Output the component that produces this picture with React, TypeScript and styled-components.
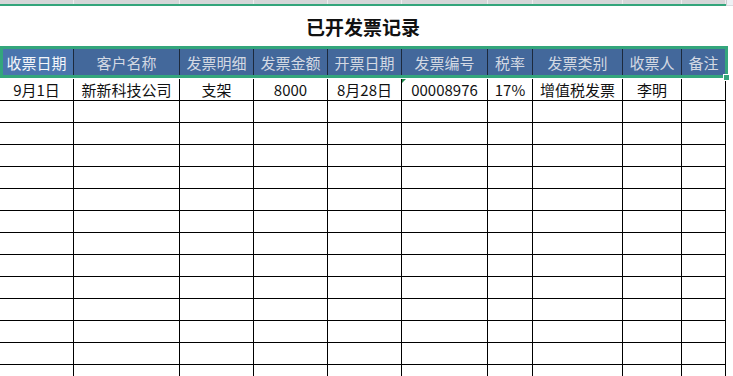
import React from "react";
import styled, { createGlobalStyle } from "styled-components";

const GlobalStyle = createGlobalStyle`
  html, body { margin: 0; padding: 0; background: #ffffff; }
  body { font-family: "Noto Sans CJK SC", "Noto Sans", sans-serif; }
`;

const COLS = [74, 106, 74, 74, 74, 86, 45, 90, 59, 44];
const template = COLS.map((c) => `${c}px`).join(" ");

const Page = styled.div`
  width: 733px;
  height: 376px;
  overflow: hidden;
  position: relative;
  background: #fff;
`;

const TopStrip = styled.div`
  display: flex;
  height: 6px;
`;

const StripCols = styled.div`
  display: grid;
  grid-template-columns: ${template};
  height: 4px;
  background: #d5d6d8;
  border-bottom: 2px solid #33a57b;
`;

const StripCol = styled.div`
  border-right: 1px solid #ececee;
`;

const StripCorner = styled.div`
  flex: 1;
  height: 6px;
  box-sizing: border-box;
  background: #eef1f5;
  border-left: 1px solid #c9ccd1;
  border-bottom: 1px solid #d9dce0;
`;

const Title = styled.div`
  width: 726px;
  height: 40px;
  display: flex;
  align-items: center;
  justify-content: center;
  font-size: 19px;
  font-weight: 700;
  color: #111;
  letter-spacing: 0;
  padding-top: 1px;
  box-sizing: border-box;
`;

const Sheet = styled.div`
  position: relative;
  width: 726px;
`;

const Row = styled.div<{ $h: number }>`
  display: grid;
  grid-template-columns: ${template};
  height: ${(p) => p.$h}px;
`;

const HeadCell = styled.div<{ $active?: boolean }>`
  display: flex;
  align-items: center;
  justify-content: center;
  background: ${(p) => (p.$active ? "#4a75ad" : "#43689b")};
  color: ${(p) => (p.$active ? "#f4f6fa" : "#d3d9e3")};
  font-size: 15px;
  border-right: 1px solid #1c2a3d;
  white-space: nowrap;
  overflow: hidden;
  padding-top: 1px;
  box-sizing: border-box;
`;

const Body = styled.div`
  padding-top: 1px;
`;

const Cell = styled.div`
  position: relative;
  display: flex;
  align-items: center;
  justify-content: center;
  border-right: 1px solid #000;
  border-bottom: 1px solid #000;
  font-size: 15px;
  color: #111;
  white-space: nowrap;
  overflow: hidden;
  box-sizing: border-box;
`;

const TextFlag = styled.span`
  position: absolute;
  left: 0;
  top: 0;
  width: 0;
  height: 0;
  border-top: 4px solid #1f8a4c;
  border-right: 4px solid transparent;
`;

const Selection = styled.div`
  position: absolute;
  left: 0;
  top: 0;
  width: 728px;
  height: 32px;
  border: 3px solid #34a67c;
  box-sizing: border-box;
  pointer-events: none;
`;

const Handle = styled.div`
  position: absolute;
  left: 723px;
  top: 74px;
  width: 5px;
  height: 5px;
  background: #34a67c;
  border: 1px solid #fff;
`;

const headers = [
  "收票日期",
  "客户名称",
  "发票明细",
  "发票金额",
  "开票日期",
  "发票编号",
  "税率",
  "发票类别",
  "收票人",
  "备注",
];

const firstRow = [
  "9月1日",
  "新新科技公司",
  "支架",
  "8000",
  "8月28日",
  "00008976",
  "17%",
  "增值税发票",
  "李明",
  "",
];

const EMPTY_ROWS = 13;

export default function App() {
  return (
    <Page>
      <GlobalStyle />
      <TopStrip>
        <StripCols>
          {COLS.map((_, i) => (
            <StripCol key={i} />
          ))}
        </StripCols>
        <StripCorner />
      </TopStrip>
      <Title>已开发票记录</Title>
      <Sheet>
        <Row $h={32}>
          {headers.map((h, i) => (
            <HeadCell key={h} $active={i === 0}>
              {h}
            </HeadCell>
          ))}
        </Row>
        <Body>
          <Row $h={22}>
            {firstRow.map((v, i) => (
              <Cell key={i}>
                {i === 5 && <TextFlag />}
                {v}
              </Cell>
            ))}
          </Row>
          {Array.from({ length: EMPTY_ROWS }).map((_, r) => (
            <Row $h={22} key={r}>
              {COLS.map((_, c) => (
                <Cell key={c} />
              ))}
            </Row>
          ))}
        </Body>
        <Selection />
      </Sheet>
      <Handle />
    </Page>
  );
}
